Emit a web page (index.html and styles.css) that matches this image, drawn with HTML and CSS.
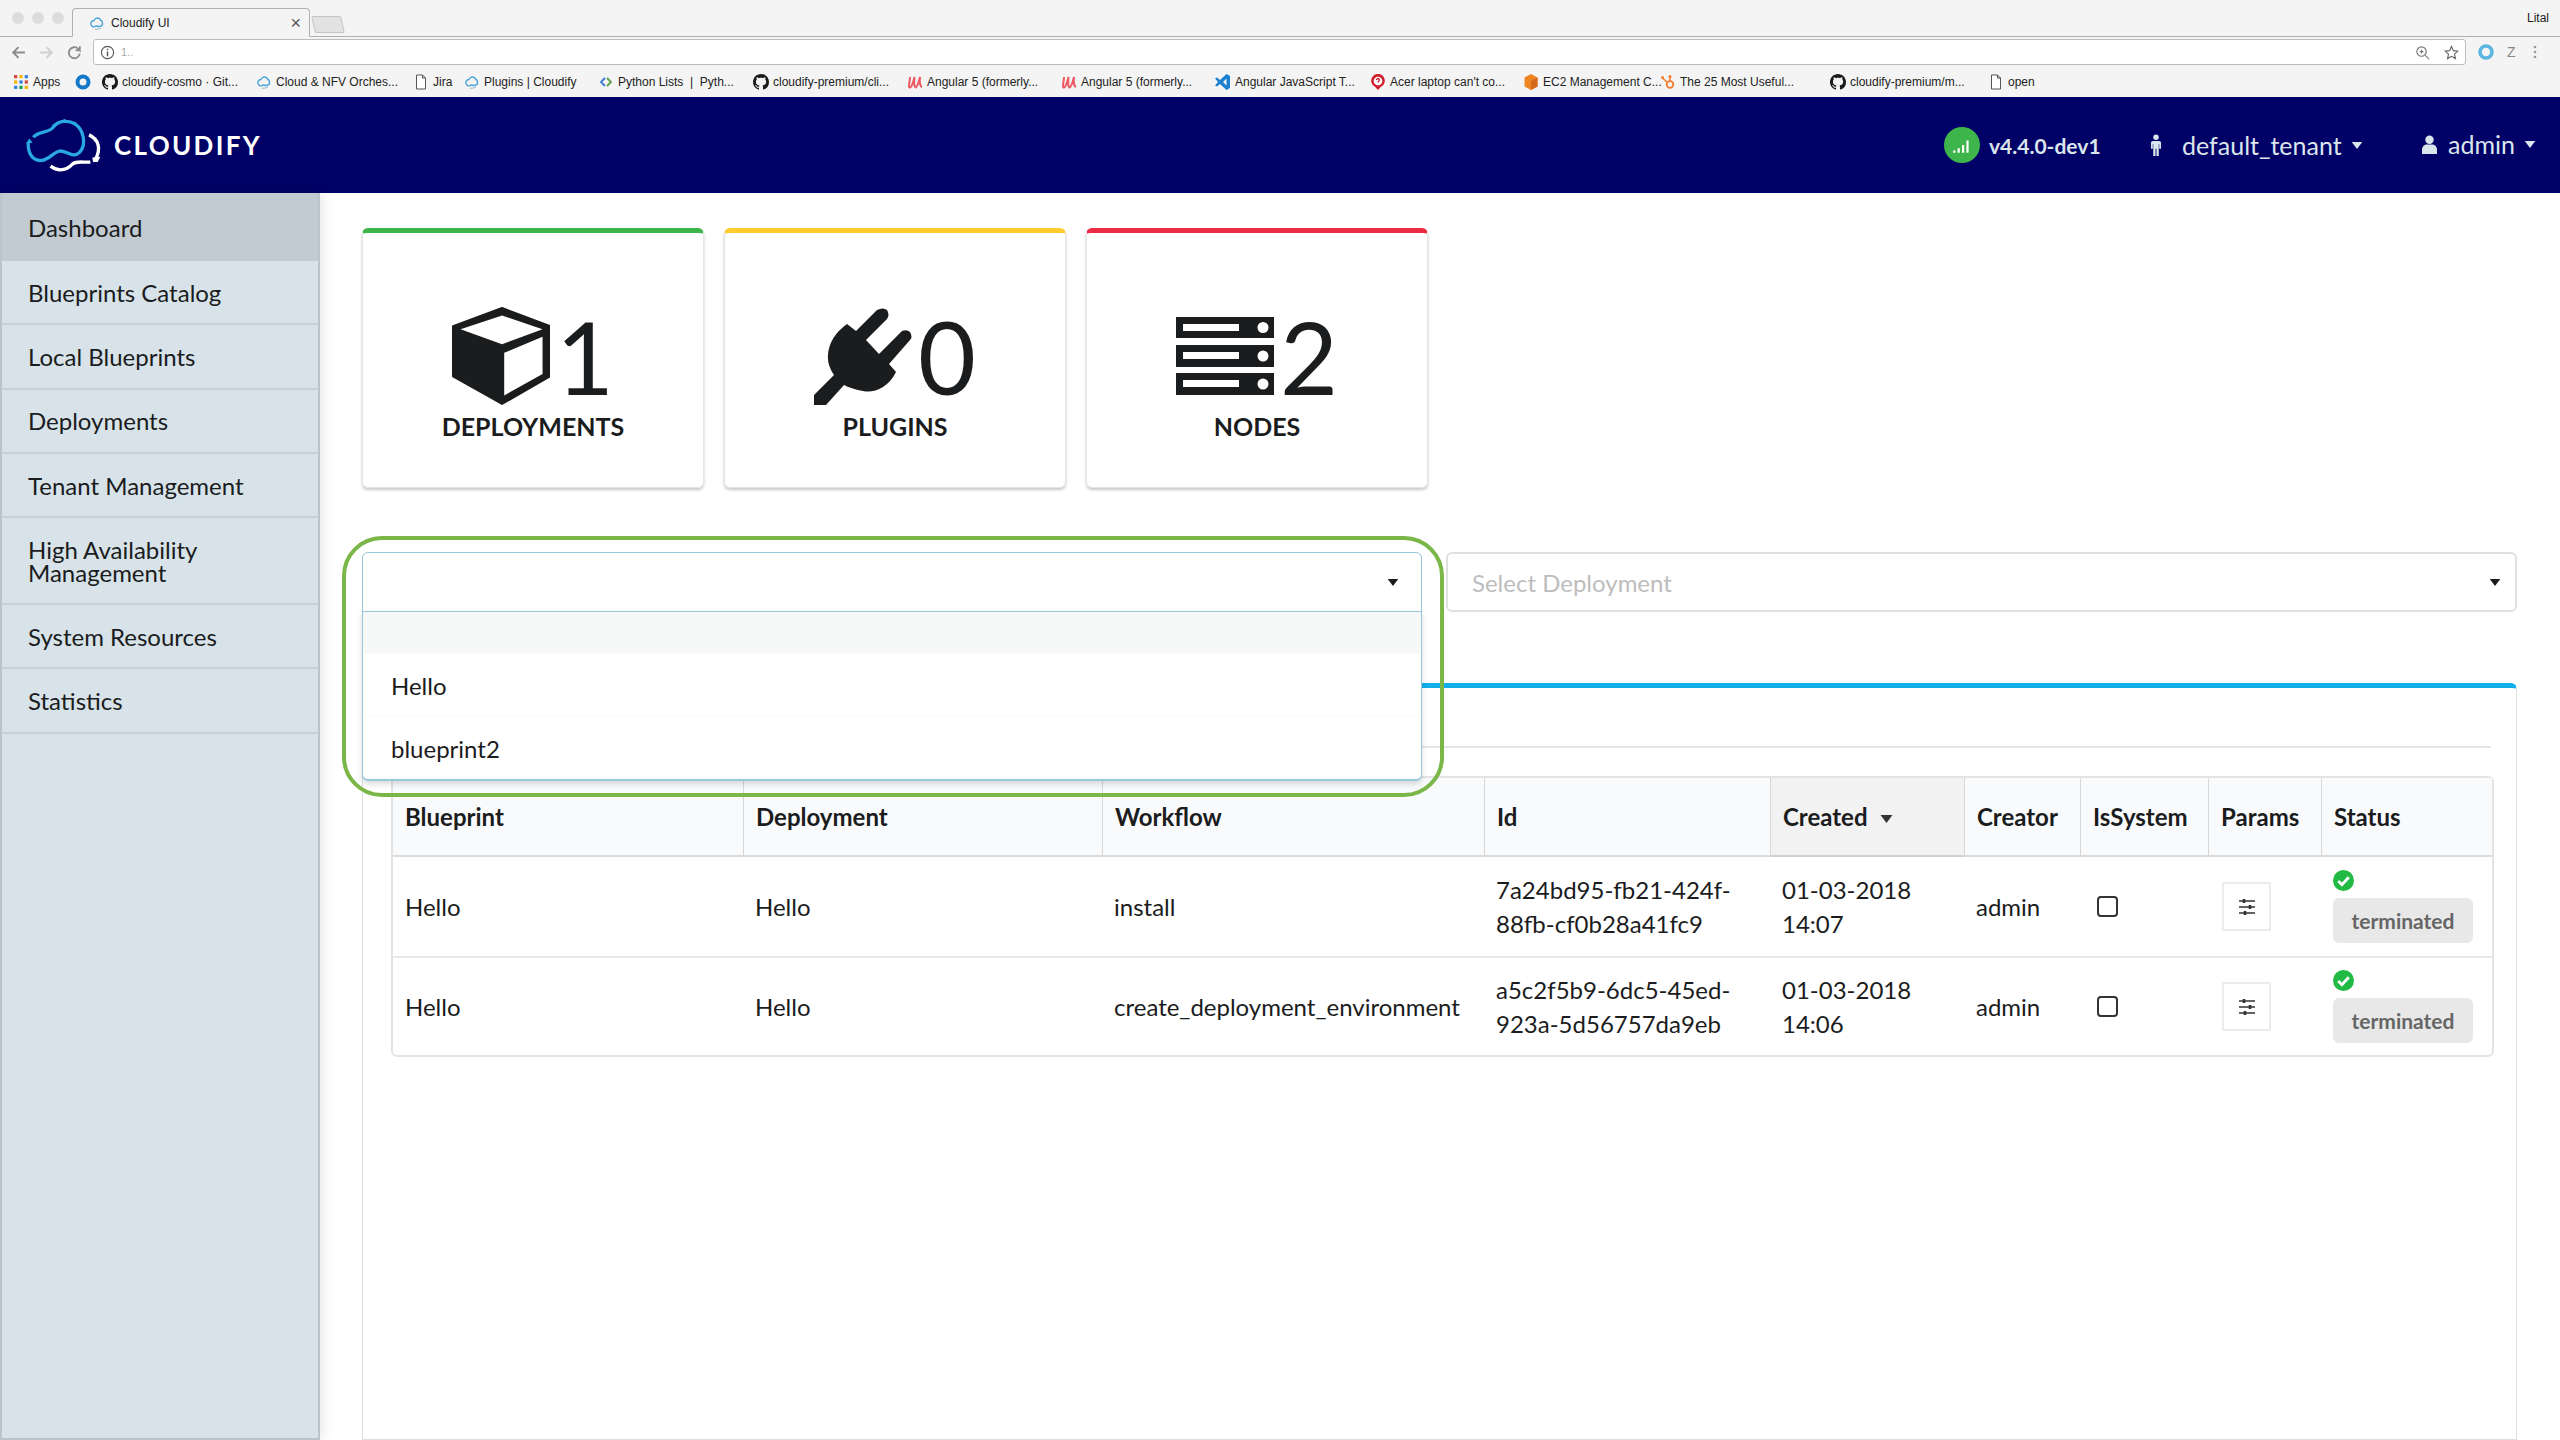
FILE: index.html
```
<!DOCTYPE html>
<html lang="en">
<head>
<meta charset="utf-8">
<title>Cloudify UI</title>
<link rel="stylesheet" href="styles.css">
</head>
<body>
<svg class="sprite" aria-hidden="true">
  <symbol id="gh" viewBox="0 0 16 16"><path d="M8 0C3.58 0 0 3.58 0 8c0 3.54 2.29 6.53 5.47 7.59.4.07.55-.17.55-.38 0-.19-.01-.82-.01-1.49-2.01.37-2.53-.49-2.69-.94-.09-.23-.48-.94-.82-1.13-.28-.15-.68-.52-.01-.53.63-.01 1.08.58 1.23.82.72 1.21 1.87.87 2.33.66.07-.52.28-.87.51-1.07-1.78-.2-3.64-.89-3.64-3.95 0-.87.31-1.59.82-2.15-.08-.2-.36-1.02.08-2.12 0 0 .67-.21 2.2.82.64-.18 1.32-.27 2-.27.68 0 1.36.09 2 .27 1.53-1.04 2.2-.82 2.2-.82.44 1.1.16 1.92.08 2.12.51.56.82 1.27.82 2.15 0 3.07-1.87 3.75-3.65 3.95.29.25.54.73.54 1.48 0 1.07-.01 1.93-.01 2.2 0 .21.15.46.55.38A8.013 8.013 0 0016 8c0-4.42-3.58-8-8-8z" fill="#1b1b1b"/></symbol>
  <symbol id="cl" viewBox="0 0 16 16"><path d="M2 9.5C1 6.500 4 5.500 5 5.500 6 2.500 10.500 2 11.500 5 14 6 14.500 10.500 11.500 11 9.500 12.500 7.500 10 6 11.500 4.500 12.500 2.500 11.500 2 9.500Z" fill="none" stroke="#4aa3d8" stroke-width="1.400"/><path d="M6 14c2 1 4 0 6-1" fill="none" stroke="#9ac3dc" stroke-width="1.200"/></symbol>
  <symbol id="doc" viewBox="0 0 16 16"><path d="M3.500 1h6l3 3v11h-9zM9.500 1v3h3" fill="#fff" stroke="#555" stroke-width="1"/></symbol>
  <symbol id="ang" viewBox="0 0 16 16"><path d="M3 3C3 8 1 12 2.500 13.500 4.500 14 6 9 7.500 3 7 8 6.500 12 8.500 13.500 10.500 13 11.500 9 13 3 12.500 8 12.500 12 15 13" fill="none" stroke="#ee5a63" stroke-width="2"/></symbol>
  <symbol id="sliders" viewBox="0 0 20 20"><path d="M2 4h16M2 10h16M2 16h16" stroke="#333" stroke-width="1.600"/><path d="M7 2v4M13 8v4M8 14v4" stroke="#333" stroke-width="2.600"/></symbol>
  <symbol id="check" viewBox="0 0 20 20"><circle cx="10" cy="10" r="10" fill="#21ba45"/><path d="M5 10.500l3.500 3.500 6.500-7" fill="none" stroke="#fff" stroke-width="2.800"/></symbol>
  <symbol id="caret" viewBox="0 0 12 8"><path d="M0 0h12L6 8z"/></symbol>
</svg>

<div class="browser">
  <div class="tabstrip">
    <div class="lights"><i></i><i></i><i></i></div>
    <div class="tab">
      <svg class="fav"><use href="#cl"/></svg>
      <span class="tab-title">Cloudify UI</span>
      <span class="tab-close">×</span>
    </div>
    <div class="newtab"></div>
    <span class="profile">Lital</span>
  </div>
  <div class="toolbar">
    <svg class="nav-ico" viewBox="0 0 16 16"><path d="M14 8H3M8 3L3 8l5 5" fill="none" stroke="#8c8c8c" stroke-width="1.800"/></svg>
    <svg class="nav-ico" viewBox="0 0 16 16"><path d="M2 8h11M8 3l5 5-5 5" fill="none" stroke="#d0d0d0" stroke-width="1.800"/></svg>
    <svg class="nav-ico" viewBox="0 0 16 16"><path d="M13 9a5.200 5.200 0 1 1-1.500-4.500L13 6V2M13 6H9" fill="none" stroke="#8c8c8c" stroke-width="1.700"/></svg>
    <div class="address">
      <svg class="addr-ico" viewBox="0 0 16 16"><circle cx="8" cy="8" r="6.500" fill="none" stroke="#555" stroke-width="1.200"/><path d="M8 7v5M8 4v1.500" stroke="#555" stroke-width="1.500"/></svg>
      <span class="url">1..</span>
      <svg class="addr-ico addr-zoom" viewBox="0 0 16 16"><circle cx="7" cy="7" r="5" fill="none" stroke="#777" stroke-width="1.200"/><path d="M11 11l4 4M5 7h4M7 5v4" stroke="#777" stroke-width="1.200"/></svg>
      <svg class="addr-ico addr-star" viewBox="0 0 16 16"><path d="M8 1.500l2 4.500 4.800.5-3.600 3.200 1 4.800L8 12.100l-4.200 2.400 1-4.800L1.200 6.500 6 6z" fill="none" stroke="#666" stroke-width="1.200"/></svg>
    </div>
    <svg class="ext-ring" viewBox="0 0 16 16"><circle cx="8" cy="8" r="6" fill="none" stroke="#5bb7e0" stroke-width="3.600"/></svg>
    <span class="ext-z">Z</span>
    <svg class="ext-dots" viewBox="0 0 4 16"><circle cx="2" cy="3" r="1.300"/><circle cx="2" cy="8" r="1.300"/><circle cx="2" cy="13" r="1.300"/></svg>
  </div>
  <div class="bookmarks">
    <div class="bm"><svg class="fav" viewBox="0 0 15 15"><rect x="1" y="1" width="3" height="3" fill="#d9453a"/><rect x="6" y="1" width="3" height="3" fill="#f4b400"/><rect x="11" y="1" width="3" height="3" fill="#2f7fe0"/><rect x="1" y="6" width="3" height="3" fill="#f4b400"/><rect x="6" y="6" width="3" height="3" fill="#2f7fe0"/><rect x="11" y="6" width="3" height="3" fill="#d9453a"/><rect x="1" y="11" width="3" height="3" fill="#2f7fe0"/><rect x="6" y="11" width="3" height="3" fill="#0f9d58"/><rect x="11" y="11" width="3" height="3" fill="#f4b400"/></svg><span>Apps</span></div>
    <div class="bm"><svg class="fav" viewBox="0 0 16 16"><circle cx="8" cy="8" r="5.500" fill="none" stroke="#1479c9" stroke-width="4"/></svg></div>
    <div class="bm"><svg class="fav"><use href="#gh"/></svg><span>cloudify-cosmo · Git...</span></div>
    <div class="bm"><svg class="fav"><use href="#cl"/></svg><span>Cloud &amp; NFV Orches...</span></div>
    <div class="bm"><svg class="fav"><use href="#doc"/></svg><span>Jira</span></div>
    <div class="bm"><svg class="fav"><use href="#cl"/></svg><span>Plugins | Cloudify</span></div>
    <div class="bm"><svg class="fav" viewBox="0 0 16 16"><path d="M7 4L3 8l4 4" fill="none" stroke="#3a7bd5" stroke-width="1.800"/><path d="M9 4l4 4-4 4" fill="none" stroke="#5a9e4b" stroke-width="1.800"/></svg><span>Python Lists &nbsp;|&nbsp; Pyth...</span></div>
    <div class="bm"><svg class="fav"><use href="#gh"/></svg><span>cloudify-premium/cli...</span></div>
    <div class="bm"><svg class="fav"><use href="#ang"/></svg><span>Angular 5 (formerly...</span></div>
    <div class="bm"><svg class="fav"><use href="#ang"/></svg><span>Angular 5 (formerly...</span></div>
    <div class="bm"><svg class="fav" viewBox="0 0 16 16"><path d="M11.500 0L15 2v12l-3.500 2L5 10l-3 2.500L0 11.500 3 8 0 4.500 2 3.500 5 6zM11.500 4.500L8 8l3.500 3.500z" fill="#1b80cf"/></svg><span>Angular JavaScript T...</span></div>
    <div class="bm"><svg class="fav" viewBox="0 0 16 16"><path d="M8 16L5 12.800A6.800 6.800 0 1 1 11 12.800z" fill="#d22030"/><circle cx="8" cy="7" r="4.300" fill="#fff"/><path d="M6.500 6c0-2 3-2 3 0 0 1-1.500 1-1.500 2.500" fill="none" stroke="#d22030" stroke-width="1.300"/></svg><span>Acer laptop can't co...</span></div>
    <div class="bm"><svg class="fav" viewBox="0 0 16 16"><path d="M8 0l6.500 3.500v9L8 16l-6.500-3.500v-9z" fill="#ef8423"/><path d="M8 7v9l6.500-3.500v-9z" fill="#d4691a"/></svg><span>EC2 Management C...</span></div>
    <div class="bm"><svg class="fav" viewBox="0 0 16 16"><circle cx="10" cy="10.500" r="3.300" fill="none" stroke="#f57b30" stroke-width="1.800"/><path d="M10 7V3M7.500 8.500L2.500 4" stroke="#f57b30" stroke-width="1.500"/><circle cx="2.500" cy="3.500" r="1.500" fill="#f57b30"/><circle cx="10" cy="2.500" r="1.500" fill="#f57b30"/></svg><span>The 25 Most Useful...</span></div>
    <div class="bm"><svg class="fav"><use href="#gh"/></svg><span>cloudify-premium/m...</span></div>
    <div class="bm"><svg class="fav"><use href="#doc"/></svg><span>open</span></div>
  </div>
</div>

<header class="appbar">
  <div class="brand">
    <svg class="logo" viewBox="75 75 235 170">
      <path d="M85 150C82 185 100 208 125 205 150 203 160 178 182 176 205 178 220 200 240 180 262 155 250 110 225 95 205 82 175 85 160 105 150 122 115 115 100 135" fill="none" stroke="#29a9e0" stroke-width="10"/>
      <path d="M78 154l10-15 10 13zM155 100l8-6 4 9zM190 80l6 0 0 8zM222 88l8 2-3 7z" fill="#29a9e0"/>
      <path d="M268 128C298 142 304 170 288 200M152 222C175 240 200 235 218 216 232 205 250 212 272 210" fill="none" stroke="#fff" stroke-width="10"/>
      <path d="M278 196l24 -2-8 16-14 0z" fill="#fff"/>
    </svg>
    <span class="brand-name">CLOUDIFY</span>
  </div>
  <div class="appbar-right">
    <div class="version">
      <span class="signal"><svg viewBox="0 0 20 20"><path d="M2 15h2v2H2zM6 13h2v4H6zM10 10h2v7h-2zM14 6h2v11h-2z" fill="#fff"/></svg></span>
      <span>v4.4.0-dev1</span>
    </div>
    <div class="bar-menu tenant">
      <svg class="bar-ico" viewBox="0 0 12 24"><circle cx="6" cy="3.500" r="3"/><path d="M2.500 7.500h7a2 2 0 0 1 2 2v6.500h-2v-5h-.5V24H6.500v-8h-1v8H3V11h-.5v5h-2V9.500a2 2 0 0 1 2-2z"/></svg>
      <span>default_tenant</span>
      <svg class="bar-caret"><use href="#caret"/></svg>
    </div>
    <div class="bar-menu user">
      <svg class="bar-ico user-ico" viewBox="0 0 16 20"><circle cx="8" cy="5" r="4.500"/><path d="M0 20v-4.500C0 12 3 10 5 10h6c2 0 5 2 5 5.500V20z"/></svg>
      <span>admin</span>
      <svg class="bar-caret"><use href="#caret"/></svg>
    </div>
  </div>
</header>

<div class="app">
  <nav class="sidebar">
    <a class="nav-item active">Dashboard</a>
    <a class="nav-item">Blueprints Catalog</a>
    <a class="nav-item">Local Blueprints</a>
    <a class="nav-item">Deployments</a>
    <a class="nav-item">Tenant Management</a>
    <a class="nav-item two-line">High Availability Management</a>
    <a class="nav-item">System Resources</a>
    <a class="nav-item">Statistics</a>
  </nav>

  <main class="content">
    <section class="cards">
      <div class="card card-green">
        <div class="card-main">
          <svg class="card-icon" viewBox="0 0 92 92"><path d="M47 1L92 18V65L47 91 1 65V18Z" fill="#1b1c1d" stroke="#1b1c1d" stroke-width="2" stroke-linejoin="round"/><path d="M8 21L47 8 85 21 47 35zM49 43L85 28V63L49 83Z" fill="#fff"/></svg>
          <span class="card-num">1</span>
        </div>
        <div class="card-label">DEPLOYMENTS</div>
      </div>
      <div class="card card-yellow">
        <div class="card-main">
          <svg class="card-icon" viewBox="0 0 98 98"><path d="M33 17L42 24 63 3Q69 0 73 3 76 8 73 12L52 33 65 47 88 24Q93 22 96 25 99 30 96 33L75 57 82 65Q77 75 69 80 59 86 49 84 38 82 30 78L12 98H0V88L20 68Q13 58 14 48 15 30 33 17Z" fill="#1b1c1d"/></svg>
          <span class="card-num">0</span>
        </div>
        <div class="card-label">PLUGINS</div>
      </div>
      <div class="card card-red">
        <div class="card-main">
          <svg class="card-icon nodes-icon" viewBox="0 0 98 78"><g fill="#1b1c1d"><rect width="98" height="21"/><rect y="28" width="98" height="22"/><rect y="56" width="98" height="22"/></g><g fill="#fff"><rect x="7" y="7" width="56" height="7"/><rect x="7" y="35" width="56" height="7"/><rect x="7" y="63" width="56" height="7"/><circle cx="87" cy="10.500" r="5.500"/><circle cx="87" cy="39" r="5.500"/><circle cx="87" cy="67" r="5.500"/></g></svg>
          <span class="card-num">2</span>
        </div>
        <div class="card-label">NODES</div>
      </div>
    </section>

    <section class="filters">
      <div class="select select-open">
        <svg class="select-caret"><use href="#caret"/></svg>
        <div class="menu">
          <div class="menu-item menu-blank"></div>
          <div class="menu-item">Hello</div>
          <div class="menu-item">blueprint2</div>
        </div>
        <div class="highlight"></div>
      </div>
      <div class="select select-rest">
        <span class="placeholder">Select Deployment</span>
        <svg class="select-caret"><use href="#caret"/></svg>
      </div>
    </section>

    <section class="widget">
      <div class="widget-rule"></div>
      <table class="exec">
        <colgroup>
          <col class="c-blueprint"><col class="c-deployment"><col class="c-workflow"><col class="c-id"><col class="c-created"><col class="c-creator"><col class="c-system"><col class="c-params"><col class="c-status">
        </colgroup>
        <thead>
          <tr>
            <th>Blueprint</th><th>Deployment</th><th>Workflow</th><th>Id</th>
            <th class="sorted">Created <svg class="sort-caret"><use href="#caret"/></svg></th>
            <th>Creator</th><th>IsSystem</th><th>Params</th><th>Status</th>
          </tr>
        </thead>
        <tbody>
          <tr>
            <td>Hello</td><td>Hello</td><td>install</td>
            <td>7a24bd95-fb21-424f-<br>88fb-cf0b28a41fc9</td>
            <td>01-03-2018<br>14:07</td>
            <td>admin</td>
            <td><span class="checkbox"></span></td>
            <td><span class="param-btn"><svg><use href="#sliders"/></svg></span></td>
            <td class="status-cell"><svg class="status-ok"><use href="#check"/></svg><span class="status-label">terminated</span></td>
          </tr>
          <tr>
            <td>Hello</td><td>Hello</td><td>create_deployment_environment</td>
            <td>a5c2f5b9-6dc5-45ed-<br>923a-5d56757da9eb</td>
            <td>01-03-2018<br>14:06</td>
            <td>admin</td>
            <td><span class="checkbox"></span></td>
            <td><span class="param-btn"><svg><use href="#sliders"/></svg></span></td>
            <td class="status-cell"><svg class="status-ok"><use href="#check"/></svg><span class="status-label">terminated</span></td>
          </tr>
        </tbody>
      </table>
    </section>
  </main>
</div>
</body>
</html>
```
FILE: styles.css
```
* { box-sizing: border-box; }
html, body { margin: 0; padding: 0; height: 1440px; overflow: hidden; }
body { font-family: "Lato", "Liberation Sans", sans-serif; color: #1b1c1d; background: #fff; display: flex; flex-direction: column; }
.sprite { display: none; }

/* browser chrome */
.browser { height: 97px; background: #f4f4f4; font-family: "Liberation Sans", Arial, sans-serif; font-size: 12px; color: #222; flex: none; }
.tabstrip { height: 37px; border-bottom: 1px solid #b0b0b0; display: flex; align-items: flex-end; position: relative; padding-left: 12px; }
.lights { display: flex; gap: 8px; align-self: flex-start; margin-top: 12px; width: 60px; }
.lights i { width: 12px; height: 12px; border-radius: 50%; background: #dcdcdc; }
.tab { width: 238px; height: 29px; margin-bottom: -1px; border: 1px solid #b0b0b0; border-bottom: 1px solid #f4f4f4; border-radius: 4px 4px 0 0; background: #f4f4f4; display: flex; align-items: center; padding: 0 8px 0 16px; gap: 6px; transform: skewX(0deg); }
.tab-title { flex: 1; }
.tab-close { font-size: 18px; color: #555; line-height: 1; }
.newtab { width: 30px; height: 17px; margin: 0 0 3px 3px; background: #e2e2e2; border: 1px solid #c4c4c4; border-radius: 2px; transform: skewX(12deg); }
.profile { margin-left: auto; margin-right: 11px; align-self: center; }
.fav { width: 16px; height: 16px; flex: none; }
.toolbar { height: 30px; display: flex; align-items: center; padding-left: 10px; }
.nav-ico { width: 17px; height: 17px; margin-right: 11px; flex: none; }
.nav-ico:nth-child(3) { margin-right: 10px; }
.address { width: 2373px; height: 26px; background: #fff; border: 1px solid #bdbdbd; border-radius: 3px; display: flex; align-items: center; padding: 0 6px; gap: 6px; flex: none; }
.addr-ico { width: 15px; height: 15px; flex: none; }
.addr-zoom { margin-left: auto; margin-right: 8px; }
.url { color: #aaa; font-size: 11px; }
.ext-ring { width: 16px; height: 16px; margin-left: 12px; flex: none; }
.ext-z { margin-left: 13px; font-size: 14px; color: #888; width: 12px; }
.ext-dots { width: 4px; height: 16px; margin-left: 14px; fill: #999; flex: none; }
.bookmarks { height: 30px; display: grid; grid-template-columns: 62px 27px 154px 157px 51px 134px 155px 154px 154px 154px 155px 153px 137px 170px 158px 1fr; padding-left: 13px; align-items: center; font-size: 12px; }
.bm { display: flex; align-items: center; gap: 4px; white-space: nowrap; }

/* app bar */
.appbar { height: 96px; background: #000066; flex: none; display: flex; align-items: center; justify-content: space-between; color: #dbe5ec; }
.brand { display: flex; align-items: center; margin-left: 25px; }
.logo { width: 78px; height: 57px; }
.brand-name { margin-left: 11px; font-size: 26px; font-weight: 700; letter-spacing: 2.300px; color: #fff; }
.appbar-right { display: flex; align-items: center; }
.version { display: flex; align-items: center; font-size: 21px; font-weight: 700; gap: 9px; width: 206px; }
.signal { width: 36px; height: 36px; border-radius: 50%; background: #3eb54a; display: flex; align-items: center; justify-content: center; }
.signal svg { width: 22px; height: 22px; }
.bar-menu { display: flex; align-items: center; font-size: 25px; }
.tenant { width: 272px; }
.user { width: 138px; margin-top: -2px; margin-right: 0; }
.bar-ico { width: 12px; height: 22px; fill: #dbe5ec; margin-right: 20px; margin-left: 0; }
.user-ico { width: 15px; height: 19px; margin-right: 11px; }
.bar-caret { width: 12px; height: 7px; margin-left: 9px; fill: #dbe5ec; }

/* layout */
.app { flex: 1; display: flex; min-height: 0; }
.sidebar { width: 320px; flex: none; background: #d7e3e8; border-left: 2px solid #b9c5cb; border-right: 2px solid #b9c5cb; box-shadow: 4px 0 10px rgba(0,0,0,.08); border-bottom: 2px solid #b9c5cb; font-size: 24px; }
.nav-item { display: flex; align-items: center; height: 64.300px; padding-left: 26px; border-bottom: 2px solid #c6d2d8; color: #1b1c1d; }
.nav-item.active { background: #c2cbd2; height: 68px; border-bottom: 0; }
.two-line { height: 87px; line-height: 23px; padding-right: 90px; }
.content { flex: 1; min-width: 0; padding: 35px 43px 0 42px; }

/* cards */
.cards { display: grid; grid-template-columns: repeat(3, 342px); gap: 20px; }
.card { height: 260px; border-radius: 6px; border: 1px solid #e4e4e4; border-top: 5px solid; box-shadow: 0 2px 3px rgba(0,0,0,.22); display: flex; flex-direction: column; align-items: center; }
.card-green { border-top-color: #3eb54a; }
.card-yellow { border-top-color: #ffcb2f; }
.card-red { border-top-color: #ec2c45; }
.card-main { display: flex; align-items: center; height: 98px; margin-top: 74px; gap: 6px; }
.card-icon { width: 98px; height: 98px; flex: none; }
.nodes-icon { height: 78px; }
.card-num { font-size: 100px; line-height: 98px; font-weight: 400; color: #1b1c1d; }
.card-label { font-size: 25px; font-weight: 700; margin-top: 6px; line-height: 30px; color: #1b1c1d; }

/* selects */
.filters { display: flex; gap: 24px; margin-top: 64px; height: 60px; position: relative; z-index: 5; }
.select { height: 60px; border: 2px solid #e0e0e0; border-radius: 6px; background: #fff; display: flex; align-items: center; position: relative; padding: 0 14px 0 24px; font-size: 24px; }
.select-open { width: 1060px; flex: none; border: 1px solid #96c8da; border-bottom-left-radius: 0; border-bottom-right-radius: 0; justify-content: flex-end; padding-right: 22px; }
.select-rest { flex: 1; justify-content: space-between; }
.select-caret { width: 12px; height: 7px; fill: #1b1c1d; }
.placeholder { color: #bdbdbd; }
.menu { position: absolute; left: -1px; right: -1px; top: 58px; background: #fff; border: 1px solid #96c8da; border-bottom-width: 2px; border-radius: 0 0 6px 6px; box-shadow: 0 3px 6px rgba(0,0,0,.15); }
.menu-item { height: 63px; display: flex; align-items: center; padding-left: 28px; border-top: 1px solid #fafafa; font-size: 24px; }
.menu-blank { height: 41px; background: #f6f7f7; border-top: 0; }
.highlight { position: absolute; top: -17px; left: -21px; width: 1102px; height: 261px; border: 4px solid #7ab648; border-radius: 40px; pointer-events: none; }

/* widget */
.widget { margin-top: 71px; height: 757px; border: 1px solid #dedede; border-top: 5px solid #12aeea; border-radius: 6px 6px 0 0; padding: 0 24px 0 28px; }
.widget-rule { height: 2px; background: #e5e5e5; margin-top: 58px; margin-right: 1px; }
.exec { width: 2099px; margin-top: 28px; border: 2px solid #e3e3e3; border-radius: 6px; border-spacing: 0; border-collapse: separate; table-layout: fixed; font-size: 24px; line-height: 34px; }
.c-blueprint { width: 350px; } .c-deployment { width: 359px; } .c-workflow { width: 382px; } .c-id { width: 286px; } .c-created { width: 194px; } .c-creator { width: 116px; } .c-system { width: 128px; } .c-params { width: 113px; } .c-status { width: 171px; }
.exec th { height: 79px; background: #f9fafb; font-weight: 700; text-align: left; padding: 0 12px; border-left: 1px solid #d8d8d8; border-bottom: 2px solid #dcdcdc; white-space: nowrap; }
.exec th:first-child { border-left: 0; }
.exec th.sorted { background: #f2f2f2; border-bottom-color: #d0d0d0; }
.sort-caret { width: 13px; height: 8px; fill: #333; margin: 0 0 3px 7px; }
.exec td { height: 99px; padding: 0 12px; border-top: 2px solid #e8e8e8; vertical-align: middle; }
.exec tbody tr:first-child td { border-top: 0; }
.checkbox { display: inline-block; width: 21px; height: 21px; border: 2px solid #333; border-radius: 4px; margin: 6px 0 0 5px; vertical-align: top; }
.param-btn { width: 49px; height: 49px; margin-left: 2px; border: 2px solid #ececec; background: #fff; display: flex; align-items: center; justify-content: center; }
.param-btn svg { width: 20px; height: 20px; }
.status-cell { padding: 0 15px; }
.status-ok { display: block; width: 21px; height: 21px; margin-bottom: 7px; }
.status-label { display: flex; align-items: center; justify-content: center; width: 140px; height: 45px; background: #e8e8e8; border-radius: 6px; color: #666; font-size: 21px; font-weight: 700; }
```
